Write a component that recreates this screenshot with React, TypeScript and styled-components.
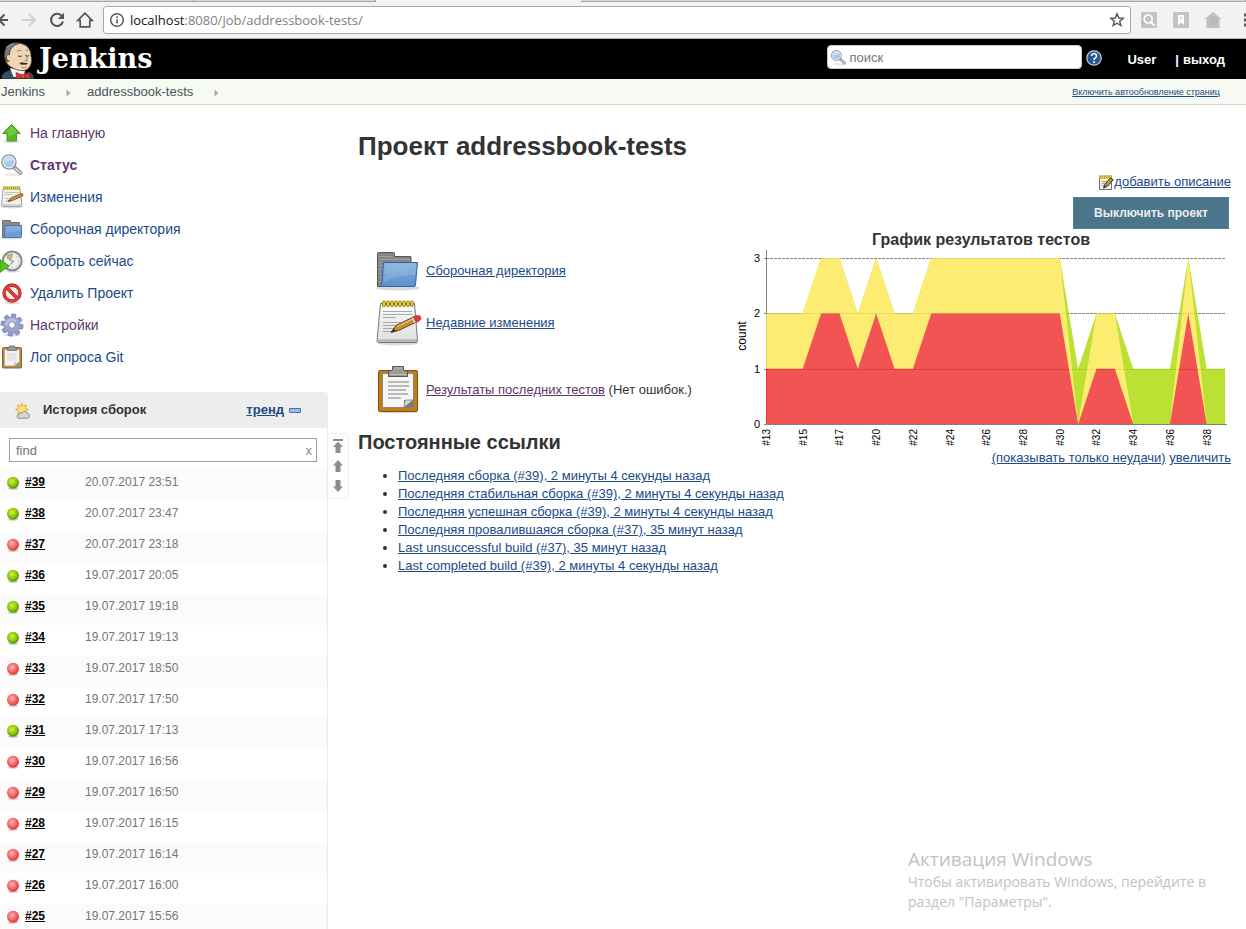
import React from "react";
import styled, { createGlobalStyle } from "styled-components";

const GlobalStyle = createGlobalStyle`
  * { box-sizing: border-box; }
  body {
    margin: 0;
    background: #fff;
    color: #333;
    font-family: "Liberation Sans", Arial, sans-serif;
    font-size: 13px;
    line-height: 18px;
  }
  button, input { font-family: inherit; }
  svg { display: block; flex: none; }
`;

const Page = styled.div`
  position: relative;
  height: 100vh;
  overflow: hidden;
  display: flex;
  flex-direction: column;
`;

/* ---------- browser bar ---------- */

const TabStrip = styled.div`
  flex: none;
  height: 2px;
  display: flex;
  background: #f2f2f2;
`;

const TabEdge = styled.div<{ $width?: number }>`
  ${(p) => (p.$width ? `width: ${p.$width}px;` : "flex: 1;")}
  background: #d6d6d6;
  border-bottom: 1px solid #a8a8a8;
  border-right: 1px solid #a0a0a0;
`;

const ActiveTabEdge = styled.div`
  width: 205px;
`;

const BrowserBar = styled.div`
  flex: none;
  height: 37px;
  display: flex;
  align-items: center;
  background: #f2f2f2;
  border-bottom: 1px solid #b6b4b6;
`;

const BarButton = styled.button<{ $width: number; $align?: "flex-start" | "flex-end" }>`
  width: ${(p) => p.$width}px;
  height: 28px;
  padding: 0;
  border: 0;
  background: none;
  display: flex;
  align-items: center;
  justify-content: ${(p) => p.$align ?? "center"};
`;

const AddressField = styled.div`
  flex: 1;
  height: 28px;
  margin: 0 2px 0 4px;
  padding: 0 5px;
  display: flex;
  align-items: center;
  gap: 5px;
  background: #fff;
  border: 1px solid #a9a9a9;
  border-radius: 3px;
`;

const Address = styled.span`
  flex: 1;
  font-family: "Open Sans", "Noto Sans", sans-serif;
  font-size: 13px;
  line-height: 20px;
  color: #808080;
  b { font-weight: 400; color: #111; }
`;

/* ---------- jenkins header ---------- */

const Header = styled.header`
  flex: none;
  height: 40px;
  display: flex;
  align-items: center;
  padding-right: 21px;
  background: #000;
  color: #fff;
`;

const Brand = styled.a`
  flex: 1;
  align-self: stretch;
  display: flex;
  align-items: flex-end;
  gap: 4px;
  color: #fff;
  text-decoration: none;
`;

const BrandName = styled.span`
  font-family: "DejaVu Serif", Georgia, serif;
  font-weight: 700;
  font-size: 27px;
  line-height: 40px;
`;

const SearchBox = styled.label`
  width: 255px;
  height: 24px;
  margin-bottom: 4px;
  padding: 0 4px 0 2px;
  display: flex;
  align-items: center;
  gap: 2px;
  background: #fff;
  border: 1px solid #ccc;
  border-radius: 4px;
`;

const SearchInput = styled.input`
  flex: 1;
  min-width: 0;
  padding: 0;
  border: 0;
  outline: 0;
  background: none;
  font-size: 13px;
  &::placeholder { color: #757575; opacity: 1; }
`;

const HelpLink = styled.a`
  margin: 0 25px 2px 4px;
`;

const HeaderLink = styled.a`
  padding-top: 2px;
  color: #fff;
  font-weight: 700;
  font-size: 13px;
  text-decoration: none;
`;

const Divider = styled.span`
  margin: 0 4px 0 19px;
  padding-top: 2px;
  font-weight: 700;
`;

/* ---------- breadcrumbs ---------- */

const Crumbs = styled.nav`
  flex: none;
  height: 26px;
  padding: 0 26px 0 1px;
  display: flex;
  align-items: center;
  background: #f6faf2;
  border-bottom: 1px solid #d3d7cf;
`;

const Crumb = styled.a`
  color: #4d545d;
  font-size: 13px;
  text-decoration: none;
`;

const CrumbArrow = styled.svg`
  margin: 2px 16px 0 21px;
`;

const RefreshLink = styled.a`
  margin-left: auto;
  font-size: 9px;
  color: #204a87;
`;

/* ---------- columns ---------- */

const Body = styled.div`
  flex: 1;
  min-height: 0;
  display: flex;
  align-items: flex-start;
`;

const Side = styled.aside`
  position: relative;
  flex: none;
  width: 328px;
  padding-top: 12px;
`;

const TaskLink = styled.a<{ $visited?: boolean; $current?: boolean }>`
  height: 32px;
  display: flex;
  align-items: center;
  gap: 6px;
  font-size: 14px;
  text-decoration: none;
  color: ${(p) => (p.$visited ? "#5c3566" : "#204a87")};
  font-weight: ${(p) => (p.$current ? 700 : 400)};
`;

const History = styled.section`
  margin-top: 19px;
  border-right: 1px solid #ededed;
`;

const HistoryHead = styled.div`
  height: 36px;
  padding: 0 26px 0 14px;
  display: flex;
  align-items: center;
  gap: 12px;
  background: #ededed;
  border-top-right-radius: 4px;
  h2 {
    flex: 1;
    margin: 0;
    font-size: 13px;
    line-height: 18px;
  }
`;

const TrendLink = styled.a`
  display: flex;
  align-items: center;
  gap: 5px;
  font-weight: 700;
  color: #204a87;
`;

const FindBox = styled.label`
  height: 24px;
  margin: 10px 10px 8px 9px;
  padding: 0 4px 0 6px;
  display: flex;
  align-items: center;
  border: 1px solid #a0a0a0;
  background: #fff;
`;

const ClearButton = styled.button`
  padding: 0;
  border: 0;
  background: none;
  color: #8a8a8a;
  font-size: 13px;
`;

const BuildTable = styled.table`
  width: 100%;
  border-collapse: collapse;
  font-size: 12px;
  tr { height: 31px; }
  tr:nth-child(odd) { background: #fbfbfb; }
  td { padding: 0 0 8px; }
  td:first-child { width: 25px; padding: 0 0 6px 6px; }
  td:nth-child(2) { width: 60px; }
  td:last-child { color: #757575; }
  a { color: #000; font-weight: 700; }
`;

const Scroller = styled.div`
  position: absolute;
  left: 327px;
  top: 328px;
  width: 22px;
  height: 66px;
  padding-top: 5px;
  display: flex;
  flex-direction: column;
  align-items: center;
  gap: 6px;
  background: #fff;
  border: 1px solid #ededed;
  border-radius: 0 4px 4px 0;
`;

const ScrollButton = styled.button`
  padding: 0;
  border: 0;
  background: none;
`;

const Main = styled.main`
  flex: 1;
  min-width: 0;
  padding: 26px 15px 0 30px;
  h1 {
    margin: 0 0 11px;
    font-size: 26px;
    line-height: 30px;
  }
`;

const Overview = styled.div`
  display: grid;
  grid-template-columns: minmax(0, 1fr) 500px;
`;

const Summary = styled.div`
  padding-top: 73px;
  white-space: nowrap;
  h2 {
    margin: 14px 0 0;
    font-size: 20px;
    line-height: 24px;
  }
`;

const SummaryRow = styled.div<{ $apart?: boolean }>`
  height: 52px;
  margin: ${(p) => (p.$apart ? 15 : 0)}px 0 0 16px;
  display: flex;
  align-items: center;
  gap: 4px;
`;

const Link = styled.a<{ $visited?: boolean }>`
  color: ${(p) => (p.$visited ? "#5c3566" : "#204a87")};
`;

const Trend = styled.div`
  display: flex;
  flex-direction: column;
  align-items: flex-end;
`;

const EditLine = styled.div`
  height: 20px;
  display: flex;
  align-items: center;
`;

const DisableButton = styled.button`
  height: 32px;
  margin: 5px 2px 0 0;
  padding: 0 20px;
  background: #4b758b;
  border: 1px solid #4f8097;
  color: #eee;
  font-size: 12px;
  font-weight: 700;
`;

const ChartTitle = styled.div`
  align-self: stretch;
  margin-top: 2px;
  text-align: center;
  font-size: 16px;
  line-height: 18px;
  font-weight: 700;
`;

const Permalinks = styled.ul`
  margin: 0;
  padding-left: 40px;
`;

const Watermark = styled.div`
  position: absolute;
  right: 0;
  bottom: 17px;
  width: 338px;
  padding-right: 30px;
  color: #c2c2c2;
  font-family: "Open Sans", "Noto Sans", sans-serif;
  font-size: 14px;
  line-height: 20px;
  strong {
    display: block;
    font-weight: 400;
    font-size: 19px;
    line-height: 26px;
  }
`;

/* ---------- large icons ---------- */

const FolderIcon = () => (
  <svg width="48" height="48" viewBox="0 0 48 48" aria-hidden="true">
    <defs>
      <linearGradient id="folderFront" x1="0" y1="0" x2="0" y2="1">
        <stop offset="0" stopColor="#82aede" />
        <stop offset="1" stopColor="#5c8fcc" />
      </linearGradient>
    </defs>
    <ellipse cx="24" cy="41" rx="22" ry="2.500" fill="#000" opacity=".15" />
    <path d="M3.500 39.500V6.500q0-1 1-1H19.500q1 0 1 1V9.500H36.500q.500 0 .500.500V39.500Z" fill="#858585" stroke="#555" />
    <path d="M5 9.500h14M5 12.500h31M5 15.500h3M5 18.500h3M5 22.500h3M5 26.500h3M5 30.500h3M5 34.500h2" stroke="#a8a8a8" strokeWidth=".8" />
    <path d="M9.500 15.500H43.500L41.500 38q0 1.500-1.500 1.500H5.500Q7.500 39 7.700 36Z" fill="url(#folderFront)" stroke="#3465a4" />
    <path d="M10.500 16.500H42.300L41.300 28Q22 28 10 35Z" fill="#fff" opacity=".14" />
  </svg>
);

const NotepadIcon = () => (
  <svg width="48" height="48" viewBox="0 0 48 48" aria-hidden="true">
    <defs>
      <linearGradient id="paper" x1="0" y1="0" x2="0" y2="1">
        <stop offset="0" stopColor="#fbfbfa" />
        <stop offset="1" stopColor="#dededc" />
      </linearGradient>
    </defs>
    <ellipse cx="24" cy="44" rx="20" ry="2.500" fill="#000" opacity=".15" />
    <path d="M6.500 4.500H40.500L43.500 41.500q0 2-1.500 2H4.500Q3 43.500 3 41.500Z" fill="url(#paper)" stroke="#777" />
    <path d="M4 40.500H43L43 42.800H4Z" fill="#b0b0ae" />
    <path d="M9 12.500H38M9 15.500H38M9 18.500H22M9 23.500H33M9 26.500H30M9 29.500H20M9 32.500H18" stroke="#a9a9a9" />
    {[8, 12, 16, 20, 24, 28, 32, 36].map((x) => (
      <rect key={x} x={x + 0.500} y="2" width="2.800" height="5.500" rx="1.400" fill="#f0d83c" stroke="#8f7704" />
    ))}
    <path d="M17 33.500 22 26.500 40.500 17.500 43.500 22.500 24.500 31.500Z" fill="#c98d33" stroke="#5f4312" />
    <path d="M23 27.500 40 19.300" stroke="#eec27c" strokeWidth="1.300" />
    <path d="M17 33.500 20 29.500 21.500 32Z" fill="#2e2e2e" />
    <path d="M39.500 18 42.500 16.500Q47 16 47 19.500 46.800 21 45 22L42.500 23.300Z" fill="#e03a3a" stroke="#b33" strokeWidth=".7" />
    <path d="M38.300 18.800 41 23.800" stroke="#d5d5d5" strokeWidth="1.500" />
  </svg>
);

const ClipboardIcon = () => (
  <svg width="48" height="48" viewBox="0 0 48 48" aria-hidden="true">
    <ellipse cx="24" cy="46" rx="20" ry="1.500" fill="#000" opacity=".15" />
    <rect x="4.500" y="4.500" width="39" height="41" rx="1.500" fill="#c17d11" stroke="#7c5210" />
    <path d="M8.500 7.500H39.500V41.500H8.500Z" fill="#f5f5f4" stroke="#888" />
    <path d="M30 41.500V34H39.500V41.500Z" fill="#777972" />
    <path d="M30 41.500 39.500 34H32Q30.500 34 30.500 36Z" fill="#d3d5cd" stroke="#666" strokeWidth=".6" />
    <path d="M14 16H35M14 20H35M14 24H32M14 28H34M14 32H27" stroke="#b9b9b7" strokeWidth="1.800" />
    <path d="M14.500 5.500 18.500 4V.5H29.500V4L33.500 5.500V10.500H14.500Z" fill="#9a9c92" stroke="#555753" />
    <path d="M16 8.500H32M19.500 2H28.500" stroke="#bdbfb6" />
  </svg>
);

/* ---------- task icons ---------- */

type SizeProps = { size: number };

const MagnifierIcon = ({ size }: SizeProps) => (
  <svg width={size} height={size} viewBox="0 0 24 24" aria-hidden="true">
    <ellipse cx="13" cy="21.500" rx="9" ry="1.500" fill="#000" opacity=".09" />
    <path d="M14.500 14.500 20.500 20" stroke="#8c8c8c" strokeWidth="4" strokeLinecap="round" />
    <path d="M15.500 15.500 20.500 20" stroke="#cfcfcf" strokeWidth="2" strokeLinecap="round" />
    <circle cx="9" cy="9" r="7" fill="#a9caef" stroke="#8b8d8a" strokeWidth="1.400" />
    <circle cx="9" cy="9" r="5.800" fill="none" stroke="#e8f1fb" strokeWidth="1.200" />
    <path d="M5 9.500Q5 5 9.500 4.500 12 5 13 7 7 7 5 9.500Z" fill="#fff" opacity=".5" />
  </svg>
);

const UpIcon = () => (
  <svg width="24" height="24" viewBox="0 0 24 24" aria-hidden="true">
    <ellipse cx="12" cy="20.500" rx="9" ry="1.500" fill="#000" opacity=".14" />
    <path d="M11.500 3.500 20.300 12.500H16.500V20H7V12.500H2.700Z" fill="#56b820" stroke="#4a9b1d" />
    <path d="M11.500 5 17.500 11.500H15.500V13Q10 13.500 8 17V11.500H5.300Z" fill="#a5e67c" opacity=".35" />
  </svg>
);

const ChangesIcon = () => (
  <svg width="24" height="24" viewBox="0 0 24 24" aria-hidden="true">
    <ellipse cx="12" cy="22" rx="10" ry="1.500" fill="#000" opacity=".14" />
    <path d="M3 3.500H20L22 20.500Q22 21.500 21 21.500H2.500Q1.500 21.500 1.500 20.500Z" fill="#f0f0ee" stroke="#a0a09e" />
    <path d="M2 20H21.500" stroke="#b9b9b7" />
    <path d="M3 3H20" stroke="#a08812" strokeWidth="3" />
    <path d="M3.500 3H20" stroke="#f0d84a" strokeWidth="2.400" strokeDasharray="1.200 .9" />
    <path d="M5 7.500H19M5 9.500H12M5 13.500H13M5 16H10" stroke="#b9b9b9" strokeWidth=".9" />
    <path d="M8 16.500 11.300 12.700 20.500 8.700 22.300 11.300 12 15.700Z" fill="#c98d33" stroke="#7b5a20" strokeWidth=".8" />
    <path d="M8 16.500 9.700 14.700 10.500 16Z" fill="#333" />
    <path d="M20 9 22 8Q24 8.500 23.500 10.500L22 11.500Z" fill="#e0524a" />
  </svg>
);

const WorkspaceIcon = () => (
  <svg width="24" height="24" viewBox="0 0 24 24" aria-hidden="true">
    <ellipse cx="12" cy="21" rx="10.500" ry="1.500" fill="#000" opacity=".14" />
    <path d="M2.500 20V3.500H10.500V5.500H19.500V20Z" fill="#8b8b8b" stroke="#717171" />
    <path d="M5 8.500H21.500V19.500Q21.500 20.500 20.500 20.500H2.500Q4.500 20 4.500 18Z" fill="#6c9dd6" stroke="#4474b3" />
    <path d="M5.500 9H21V14Q11 14 5.500 17Z" fill="#fff" opacity=".16" />
  </svg>
);

const BuildNowIcon = () => (
  <svg width="24" height="24" viewBox="0 0 24 24" aria-hidden="true">
    <ellipse cx="13" cy="22.500" rx="8" ry="1.200" fill="#000" opacity=".12" />
    <circle cx="12.200" cy="12" r="9.500" fill="#efefed" stroke="#868696" strokeWidth="2" />
    <circle cx="12.200" cy="12" r="7.800" fill="none" stroke="#d0d0d8" strokeWidth=".8" />
    <path d="M19 12H17.800M12.200 19V17.800M17.200 7.200 16.400 8M17.200 17 16.400 16.200" stroke="#999" strokeWidth=".8" />
    <path d="M7.500 6 12.500 5.300 11.500 9.500 7.500 9.800Z" fill="#dbbd55" stroke="#a08e48" strokeWidth=".7" />
    <path d="M9 10.500 13.500 12.500 10 15.500" fill="none" stroke="#666" strokeWidth=".9" />
    <path d="M0 10.500 9.500 17 0 23.500Z" fill="#55c41d" stroke="#3c9a12" strokeWidth=".8" />
  </svg>
);

const DeleteIcon = () => (
  <svg width="24" height="24" viewBox="0 0 24 24" aria-hidden="true">
    <ellipse cx="12" cy="21.800" rx="8" ry="1.500" fill="#000" opacity=".14" />
    <circle cx="12" cy="12" r="8" fill="#f3efef" stroke="#b52222" strokeWidth="3.400" />
    <path d="M6.500 6.500 17.500 17.500" stroke="#b52222" strokeWidth="3.600" />
    <circle cx="12" cy="12" r="8" fill="none" stroke="#e23b3b" strokeWidth="2.200" />
    <path d="M6.300 6.300 17.700 17.700" stroke="#e23b3b" strokeWidth="2.400" />
  </svg>
);

const GearIcon = () => (
  <svg width="24" height="24" viewBox="0 0 24 24" aria-hidden="true">
    <ellipse cx="12" cy="22" rx="9" ry="1.500" fill="#000" opacity=".12" />
    <g fill="#8f9cc6" stroke="#7280ad" strokeWidth=".7">
      {[10, 55, 100, 145, 190, 235, 280, 325].map((a) => (
        <path key={a} d="M9.300 6 10 1H14L14.700 6Z" transform={`rotate(${a} 12 12)`} />
      ))}
    </g>
    <circle cx="12" cy="12" r="7.600" fill="#98a5cd" />
    <path d="M5 12A7 7 0 0 1 17 7.200L14.500 10A3.600 3.600 0 0 0 8.500 12.500Z" fill="#c0c9e6" opacity=".7" />
    <circle cx="12" cy="12" r="3.200" fill="#fff" stroke="#7280ad" strokeWidth=".8" />
  </svg>
);

const PollingLogIcon = () => (
  <svg width="24" height="24" viewBox="0 0 24 24" aria-hidden="true">
    <rect x="2.500" y="2.500" width="19" height="20.500" rx="1" fill="#b98431" stroke="#8c6630" />
    <path d="M4.500 4.500H19.500V21H4.500Z" fill="#f3f3f2" stroke="#b5a68c" strokeWidth=".8" />
    <path d="M7 9H17M7 11H17M7 13H15.500M7 15H16" stroke="#d2d2d0" strokeWidth=".9" />
    <path d="M14.500 21V17H19.500V21Z" fill="#8a8c85" />
    <path d="M14.500 21 19.500 17H15Z" fill="#d3d5cd" />
    <path d="M7.500 3 9.500 2.500V1H14.500V2.500L16.500 3V5.500H7.500Z" fill="#9a9c92" stroke="#6b6d68" strokeWidth=".8" />
  </svg>
);

const EditIcon = () => (
  <svg width="16" height="16" viewBox="0 0 16 16" aria-hidden="true">
    <path d="M1.500 3H13.500V15.500H1.500Z" fill="#f1f1ef" stroke="#6f6f6f" />
    <path d="M1 3H14" stroke="#a58a04" strokeWidth="3" />
    <path d="M1.500 3H14" stroke="#f5dd3c" strokeWidth="2.400" strokeDasharray="1 .8" />
    <path d="M3.500 7.500H10M3.500 9.500H7M3.500 11.500H6" stroke="#a9a9a9" />
    <path d="M5.500 14 7 10 12.500 4 15.300 5.700 9.500 12.200Z" fill="#b89247" stroke="#3d3421" />
    <path d="M5.500 14 6.300 11.800 7.700 13Z" fill="#222" />
  </svg>
);

/* ---------- other icons ---------- */

const WeatherIcon = () => (
  <svg width="17" height="17" viewBox="0 0 17 17" aria-hidden="true">
    {[0, 45, 90, 135, 180, 225, 270, 315].map((a) => (
      <path key={a} d="M6.800 3.200 8 .2 9.200 3.200Z" fill="#eda73c" transform={`rotate(${a} 8 7.500)`} />
    ))}
    <circle cx="8" cy="7.500" r="4.300" fill="#fbe27a" stroke="#f0a93a" strokeWidth=".9" />
    <path d="M5 16.300Q3 16.300 3 14.500 3 12.700 5 12.500 5.500 10.500 8 10.800 9 9.300 11 9.500 13 9.800 13.300 11.500 15.500 11.700 15.500 14 15.500 16.300 13 16.300Z" fill="#d4d4d4" stroke="#8b8b8b" strokeWidth=".9" />
  </svg>
);

const Ball = ({ ok }: { ok: boolean }) => (
  <svg width="14" height="14" viewBox="0 0 14 14" role="img" aria-label={ok ? "Успешно" : "Провалилась"}>
    <defs>
      <radialGradient id={ok ? "ballOk" : "ballBad"} cx=".42" cy=".38" r=".62">
        <stop offset="0" stopColor={ok ? "#d9f03c" : "#fdbcbc"} />
        <stop offset=".6" stopColor={ok ? "#8cc80c" : "#f56464"} />
        <stop offset="1" stopColor={ok ? "#4b9106" : "#e33030"} />
      </radialGradient>
    </defs>
    <ellipse cx="7" cy="12.500" rx="5" ry="1.300" fill="#000" opacity=".2" />
    <circle cx="7" cy="6.800" r="6" fill={`url(#${ok ? "ballOk" : "ballBad"})`} />
  </svg>
);

const Butler = () => (
  <svg width="35" height="38" viewBox="0 0 35 38" aria-hidden="true">
    <path d="M1.500 38Q1.500 32.500 5.500 31L11 28.500 22 32 30 31.500Q33.500 32.500 34 38Z" fill="#335061" stroke="#1b2d38" strokeWidth=".8" />
    <path d="M10 27 13.500 36H23L25 30Z" fill="#f5f5f5" />
    <path d="M9.500 25Q4.500 21 5 14 5.500 5 13 2.800 20 .8 26 4.500 31 8.500 31 15 32.500 19 31 23 29 28.500 24.500 29.500 17 30.500 9.500 25Z" fill="#f0d6b7" stroke="#54483a" strokeWidth=".8" />
    <path d="M8 21Q4 18 4.500 12 5.500 4.500 13 2.300 17 1 20 2 13.500 3.500 11 7.500 9.500 10 9.500 13Z" fill="#77787a" stroke="#3b3a3a" strokeWidth=".8" />
    <path d="M6 6.500Q9 3.500 14 2.500" fill="none" stroke="#b7b8ba" strokeWidth=".9" />
    <path d="M9.500 13.500Q6 13 6.500 17 7 20.500 9.800 20" fill="#f0d6b7" stroke="#54483a" strokeWidth=".8" />
    <path d="M17 10.500Q19 8.500 21.500 9.800M25.500 9.500Q27 8.500 28.500 9.500" fill="none" stroke="#7c654f" strokeWidth=".8" />
    <path d="M18 14.800Q20 16.300 22 14.800M26 14.500Q27.500 16 29 14.500" fill="none" stroke="#40342a" strokeWidth="1" />
    <path d="M25 13.500Q28 17.500 27.200 19.300 26 20.300 24.500 19.500" fill="none" stroke="#8d7052" strokeWidth=".9" />
    <path d="M19.500 22.500Q22 20.500 24 22 26.500 21.300 28 22.800 26 24 24 23.500 21.500 24.200 19.500 22.500Z" fill="#3a2d23" />
    <path d="M21.500 26.500Q24 27.500 26.500 26.300" fill="none" stroke="#a87d5a" strokeWidth=".9" />
    <path d="M16 31.500 22 33.800 22 36.500 16.500 38ZM24.500 33.800 29.500 31.500 30 38 24.500 36.500Z" fill="#d33833" stroke="#8a1c18" strokeWidth=".6" />
    <rect x="21.500" y="33.300" width="3.200" height="3.700" rx="1" fill="#ef4a45" stroke="#8a1c18" strokeWidth=".5" />
  </svg>
);

const HelpIcon = () => (
  <svg width="16" height="16" viewBox="0 0 16 16" role="img" aria-label="Справка">
    <circle cx="8" cy="8" r="7.200" fill="#2c5696" stroke="#c3d3ea" strokeWidth="1.200" />
    <path d="M5.500 6Q5.600 3.800 8 3.800 10.500 3.800 10.500 6 10.500 7.200 9.200 8 8 8.700 8 9.900" fill="none" stroke="#fff" strokeWidth="1.500" />
    <circle cx="8" cy="12" r="1" fill="#fff" />
  </svg>
);

const Arrow = ({ d }: { d: string }) => (
  <svg width="12" height="14" viewBox="0 0 12 14" aria-hidden="true">
    <path d={d} fill="#8c8c8c" />
  </svg>
);

/* ---------- test trend chart ---------- */

const STEP = 459 / 25;
const LEFT = 35;
const BASE = 175;
const UNIT = 55.3;

const failed = [1, 1, 1, 2, 2, 1, 2, 1, 1, 2, 2, 2, 2, 2, 2, 2, 2, 0, 1, 1, 0, 0, 0, 2, 0, 0];
const skipped = [2, 2, 2, 3, 3, 2, 3, 2, 2, 3, 3, 3, 3, 3, 3, 3, 3, 0, 2, 2, 0, 0, 0, 3, 0, 0];
const total = [2, 2, 2, 3, 3, 2, 3, 2, 2, 3, 3, 3, 3, 3, 3, 3, 3, 1, 2, 2, 1, 1, 1, 3, 1, 1];
const ticks = ["#13", "#15", "#17", "#20", "#22", "#24", "#26", "#28", "#30", "#32", "#34", "#36", "#38"];

const area = (values: number[]) =>
  `M${LEFT} ${BASE}` + values.map((v, i) => `L${LEFT + i * STEP} ${BASE - v * UNIT}`).join("") + `L${LEFT + 459} ${BASE}Z`;

const TrendChart = () => (
  <svg width="500" height="200" viewBox="0 0 500 200" role="img" aria-label="График результатов тестов" fontFamily="Liberation Sans, Arial, sans-serif">
    {[1, 2, 3].map((v) => (
      <line key={v} x1={LEFT} x2={LEFT + 459} y1={Math.round(BASE - v * UNIT) + 0.5} y2={Math.round(BASE - v * UNIT) + 0.5} stroke="#808080" strokeDasharray="3 1" />
    ))}
    <path d="M35.500 1V175.500H496M33 9.500H35M33 64.500H35M33 120.500H35M33 175.500H35" fill="none" stroke="#808080" />
    <g opacity=".8">
      <path d={area(total)} fill="#abda00" />
      <path d={area(skipped)} fill="#fce94f" />
      <path d={area(failed)} fill="#ef2929" />
    </g>
    {[0, 1, 2, 3].map((v) => (
      <text key={v} x="29" y={Math.round(BASE - v * UNIT) + 4} fontSize="11" textAnchor="end" fill="#000">{v}</text>
    ))}
    <text transform="translate(15 87) rotate(-90)" fontSize="12" textAnchor="middle" fill="#000">count</text>
    {ticks.map((t, i) => (
      <text key={t} transform={`translate(${Math.round(LEFT + i * 2 * STEP) + 4} 180) rotate(-90)`} fontSize="10" textAnchor="end" fill="#000">{t}</text>
    ))}
  </svg>
);

/* ---------- data ---------- */

const tasks = [
  { label: "На главную", icon: <UpIcon />, visited: true },
  { label: "Статус", icon: <MagnifierIcon size={24} />, visited: true, current: true },
  { label: "Изменения", icon: <ChangesIcon /> },
  { label: "Сборочная директория", icon: <WorkspaceIcon /> },
  { label: "Собрать сейчас", icon: <BuildNowIcon /> },
  { label: "Удалить Проект", icon: <DeleteIcon /> },
  { label: "Настройки", icon: <GearIcon />, visited: true },
  { label: "Лог опроса Git", icon: <PollingLogIcon /> },
];

const builds: [number, boolean, string][] = [
  [39, true, "20.07.2017 23:51"],
  [38, true, "20.07.2017 23:47"],
  [37, false, "20.07.2017 23:18"],
  [36, true, "19.07.2017 20:05"],
  [35, true, "19.07.2017 19:18"],
  [34, true, "19.07.2017 19:13"],
  [33, false, "19.07.2017 18:50"],
  [32, false, "19.07.2017 17:50"],
  [31, true, "19.07.2017 17:13"],
  [30, false, "19.07.2017 16:56"],
  [29, false, "19.07.2017 16:50"],
  [28, false, "19.07.2017 16:15"],
  [27, false, "19.07.2017 16:14"],
  [26, false, "19.07.2017 16:00"],
  [25, false, "19.07.2017 15:56"],
];

const permalinks = [
  "Последняя сборка (#39), 2 минуты 4 секунды назад",
  "Последняя стабильная сборка (#39), 2 минуты 4 секунды назад",
  "Последняя успешная сборка (#39), 2 минуты 4 секунды назад",
  "Последняя провалившаяся сборка (#37), 35 минут назад",
  "Last unsuccessful build (#37), 35 минут назад",
  "Last completed build (#39), 2 минуты 4 секунды назад",
];

export default function App() {
  return (
    <Page>
      <GlobalStyle />
      <TabStrip>
        <TabEdge $width={194} />
        <TabEdge $width={182} />
        <ActiveTabEdge />
        <TabEdge />
      </TabStrip>
      <BrowserBar>
        <BarButton $width={15} $align="flex-start" aria-label="Назад">
          <svg width="8" height="16" viewBox="8 0 8 16"><path d="M2 8H16M5.500 2 11.500 2" fill="none" stroke="none" /><path d="M8 8H16M8 7 12.500 2.500M8 9 12.500 13.500" fill="none" stroke="#555" strokeWidth="2" /></svg>
        </BarButton>
        <BarButton $width={28} aria-label="Вперёд">
          <svg width="16" height="16" viewBox="0 0 16 16"><path d="M1 8H14M8 2 14 8 8 14" fill="none" stroke="#d0d0d0" strokeWidth="2" /></svg>
        </BarButton>
        <BarButton $width={28} aria-label="Обновить">
          <svg width="16" height="16" viewBox="0 0 16 16">
            <path d="M13.300 4.600A6.100 6.100 0 1 0 14 9.500" fill="none" stroke="#555" strokeWidth="2.100" />
            <path d="M15 .8V7H8.800Z" fill="#555" />
          </svg>
        </BarButton>
        <BarButton $width={28} aria-label="Домой">
          <svg width="18" height="18" viewBox="0 0 18 18"><path d="M9 2.200 1.800 9.300H4.200V15.800H13.800V9.300H16.200Z" fill="none" stroke="#555" strokeWidth="1.700" /></svg>
        </BarButton>
        <AddressField>
          <svg width="16" height="16" viewBox="0 0 16 16" aria-hidden="true">
            <circle cx="8" cy="8" r="6.300" fill="none" stroke="#5a5a5a" strokeWidth="1.500" />
            <path d="M8 7.200V11.500M8 4.300V6" stroke="#5a5a5a" strokeWidth="1.600" />
          </svg>
          <Address><b>localhost</b>:8080/job/addressbook-tests/</Address>
          <svg width="16" height="16" viewBox="0 0 16 16" aria-hidden="true">
            <path d="M8 1.800 9.700 6 14.200 6.300 10.700 9.200 11.900 13.600 8 11.200 4.100 13.600 5.300 9.200 1.800 6.300 6.300 6Z" fill="none" stroke="#555" strokeWidth="1.400" />
          </svg>
        </AddressField>
        <BarButton $width={32} aria-label="Поиск">
          <svg width="16" height="16" viewBox="0 0 16 16"><rect width="16" height="16" rx="1.500" fill="#c3c3c3" /><circle cx="7.200" cy="7" r="4" fill="none" stroke="#fff" strokeWidth="1.700" /><path d="M10 10 13.500 13.500" stroke="#fff" strokeWidth="2" /></svg>
        </BarButton>
        <BarButton $width={32} aria-label="Закладки">
          <svg width="16" height="16" viewBox="0 0 16 16"><rect width="16" height="16" rx="1.500" fill="#c3c3c3" /><path d="M5 3H11V13L8 10.500 5 13Z" fill="#fff" /><circle cx="8" cy="6" r="1.100" fill="#c3c3c3" /></svg>
        </BarButton>
        <BarButton $width={32} aria-label="Главная">
          <svg width="18" height="16" viewBox="0 0 18 16"><path d="M9 0 17.500 7.300H15.500V16H2.500V7.300H.5Z" fill="#c0c0c0" /><circle cx="9" cy="9" r="3.500" fill="none" stroke="#b2b2b2" /><circle cx="9" cy="9" r="1.200" fill="#b2b2b2" /></svg>
        </BarButton>
        <BarButton $width={17} $align="flex-end" aria-label="Меню">
          <svg width="2" height="14" viewBox="0 0 2 14"><path d="M0 .5H2V3.500H0ZM0 5.500H2V8.500H0ZM0 10.500H2V13.500H0Z" fill="#555" /></svg>
        </BarButton>
      </BrowserBar>

      <Header>
        <Brand href="#">
          <Butler />
          <BrandName>Jenkins</BrandName>
        </Brand>
        <SearchBox>
          <MagnifierIcon size={17} />
          <SearchInput type="text" placeholder="поиск" aria-label="поиск" />
        </SearchBox>
        <HelpLink href="#"><HelpIcon /></HelpLink>
        <HeaderLink href="#">User</HeaderLink>
        <Divider>|</Divider>
        <HeaderLink href="#">выход</HeaderLink>
      </Header>

      <Crumbs>
        <Crumb href="#">Jenkins</Crumb>
        <CrumbArrow width="5" height="8" viewBox="0 0 5 8"><path d="M.5 .5 4.500 4 .5 7.500Z" fill="#a9aca6" /></CrumbArrow>
        <Crumb href="#">addressbook-tests</Crumb>
        <CrumbArrow width="5" height="8" viewBox="0 0 5 8"><path d="M.5 .5 4.500 4 .5 7.500Z" fill="#a9aca6" /></CrumbArrow>
        <RefreshLink href="#">Включить автообновление страниц</RefreshLink>
      </Crumbs>

      <Body>
        <Side>
          {tasks.map((t) => (
            <TaskLink key={t.label} href="#" $visited={t.visited} $current={t.current}>
              {t.icon}
              {t.label}
            </TaskLink>
          ))}
          <History>
            <HistoryHead>
              <WeatherIcon />
              <h2>История сборок</h2>
              <TrendLink href="#">
                тренд
                <svg width="12" height="5" viewBox="0 0 12 5" aria-hidden="true"><rect x=".5" y=".5" width="11" height="4" rx=".5" fill="#9dbde3" stroke="#3f6fae" /></svg>
              </TrendLink>
            </HistoryHead>
            <FindBox>
              <SearchInput type="text" placeholder="find" aria-label="find" />
              <ClearButton>x</ClearButton>
            </FindBox>
            <BuildTable>
              <tbody>
                {builds.map(([n, ok, date]) => (
                  <tr key={n}>
                    <td><Ball ok={ok} /></td>
                    <td><a href="#">#{n}</a></td>
                    <td>{date}</td>
                  </tr>
                ))}
              </tbody>
            </BuildTable>
          </History>
          <Scroller>
            <ScrollButton aria-label="В начало"><Arrow d="M1 0H11V2H1ZM6 2.500 11 8H8.500V14H3.500V8H1Z" /></ScrollButton>
            <ScrollButton aria-label="Вверх"><Arrow d="M6 1 11 6.500H8.500V13H3.500V6.500H1Z" /></ScrollButton>
            <ScrollButton aria-label="Вниз"><Arrow d="M6 13 11 7.500H8.500V1H3.500V7.500H1Z" /></ScrollButton>
          </Scroller>
        </Side>

        <Main>
          <h1>Проект addressbook-tests</h1>
          <Overview>
            <Summary>
              <SummaryRow>
                <FolderIcon />
                <Link href="#">Сборочная директория</Link>
              </SummaryRow>
              <SummaryRow>
                <NotepadIcon />
                <Link href="#">Недавние изменения</Link>
              </SummaryRow>
              <SummaryRow $apart>
                <ClipboardIcon />
                <span><Link href="#" $visited>Результаты последних тестов</Link> (Нет ошибок.)</span>
              </SummaryRow>
              <h2>Постоянные ссылки</h2>
            </Summary>
            <Trend>
              <EditLine>
                <EditIcon />
                <Link href="#">добавить описание</Link>
              </EditLine>
              <DisableButton>Выключить проект</DisableButton>
              <ChartTitle>График результатов тестов</ChartTitle>
              <TrendChart />
              <div>
                <Link href="#">(показывать только неудачи)</Link> <Link href="#">увеличить</Link>
              </div>
            </Trend>
          </Overview>
          <Permalinks>
            {permalinks.map((p) => (
              <li key={p}><Link href="#">{p}</Link></li>
            ))}
          </Permalinks>
        </Main>
      </Body>

      <Watermark>
        <strong>Активация Windows</strong>
        Чтобы активировать Windows, перейдите в раздел "Параметры".
      </Watermark>
    </Page>
  );
}
